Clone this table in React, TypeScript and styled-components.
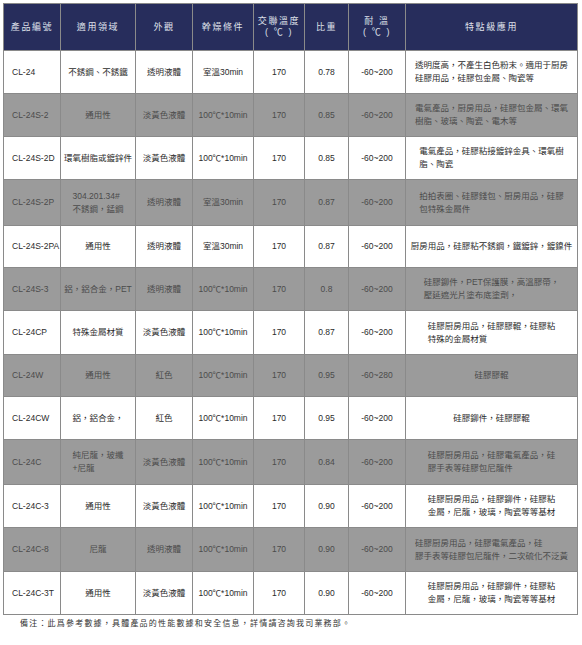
import React from "react";
import styled, { createGlobalStyle } from "styled-components";

const Global = createGlobalStyle`
  html, body { margin: 0; padding: 0; background: #ffffff; }
  body { font-family: "Liberation Sans", "Noto Sans CJK TC", sans-serif; }
`;

const Page = styled.div`
  padding: 3px 5px 0 3px;
  width: 574px;
`;

const Table = styled.table`
  width: 574px;
  border-collapse: collapse;
  table-layout: fixed;
  font-family: "Liberation Sans", "Noto Sans CJK TC", sans-serif;
  font-size: 8.5px;
  border: 1px solid #8a8a8a;
`;

const HeadRow = styled.tr`
  height: 47px;
  background: #272d5c;
`;

const Th = styled.th`
  border: 1px solid #8a8a8a;
  color: #dfe0ea;
  font-weight: normal;
  font-size: 9px;
  letter-spacing: 1.6px;
  line-height: 11px;
  text-align: center;
  vertical-align: middle;
  padding: 0 2px;
`;

const Row = styled.tr<{ $grey: boolean; $h: number }>`
  height: ${(p) => p.$h}px;
  background: ${(p) => (p.$grey ? "#9b9b9b" : "#ffffff")};
  color: ${(p) => (p.$grey ? "#4b4b4b" : "#2b2b2b")};
`;

const Td = styled.td<{ $left?: boolean }>`
  border: 1px solid #8a8a8a;
  text-align: ${(p) => (p.$left ? "left" : "center")};
  padding: ${(p) => (p.$left ? "0 0 0 8px" : "0 2px")};
  vertical-align: middle;
  line-height: 13px;
  white-space: nowrap;
  overflow: hidden;
`;

const Lines = styled.span`
  display: inline-block;
  text-align: left;
`;

const Note = styled.div`
  margin: 3px 0 0 17px;
  font-family: "Liberation Sans", "Noto Sans CJK TC", sans-serif;
  font-size: 8px;
  letter-spacing: 1.2px;
  color: #333333;
  line-height: 11px;
`;

const widths = [57, 75, 57, 61, 51, 44, 57, 172];

const heads: string[][] = [
  ["產品編號"],
  ["適用領域"],
  ["外觀"],
  ["幹燥條件"],
  ["交聯溫度", "( ℃ )"],
  ["比重"],
  ["耐 溫", "( ℃ )"],
  ["特點級應用"],
];

type R = { c: (string | string[])[] };

const rows: R[] = [
  { c: ["CL-24", "不銹鋼、不銹鐵", "透明液體", "室溫30min", "170", "0.78", "-60~200", ["透明度高，不產生白色粉末。適用于厨房", "硅膠用品，硅膠包金屬、陶瓷等"]] },
  { c: ["CL-24S-2", "通用性", "淡黃色液體", "100℃*10min", "170", "0.85", "-60~200", ["電氣產品，厨房用品，硅膠包金屬、環氧", "樹脂、玻璃、陶瓷、電木等"]] },
  { c: ["CL-24S-2D", "環氧樹脂或鍍鋅件", "淡黃色液體", "100℃*10min", "170", "0.85", "-60~200", ["電氣產品，硅膠粘接鍍鋅金具、環氧樹", "脂、陶瓷"]] },
  { c: ["CL-24S-2P", ["304.201.34#", "不銹鋼，錳鋼"], "透明液體", "室溫30min", "170", "0.87", "-60~200", ["拍拍表圈、硅膠錢包、厨房用品，硅膠", "包特殊金屬件"]] },
  { c: ["CL-24S-2PA", "通用性", "透明液體", "室溫30min", "170", "0.87", "-60~200", ["厨房用品，硅膠粘不銹鋼，鐵鍍鋅，鍍鎳件"]] },
  { c: ["CL-24S-3", "鋁，鋁合金，PET", "透明液體", "100℃*10min", "170", "0.8", "-60~200", ["硅膠鉚件，PET保護膜，高溫膠帶，", "壓延遮光片塗布底塗劑，"]] },
  { c: ["CL-24CP", "特殊金屬材質", "淡黃色液體", "100℃*10min", "170", "0.87", "-60~200", ["硅膠厨房用品，硅膠膠輥，硅膠粘", "特殊的金屬材質"]] },
  { c: ["CL-24W", "通用性", "紅色", "100℃*10min", "170", "0.95", "-60~280", ["硅膠膠輥"]] },
  { c: ["CL-24CW", "鋁，鋁合金，", "紅色", "100℃*10min", "170", "0.95", "-60~200", ["硅膠鉚件，硅膠膠輥"]] },
  { c: ["CL-24C", ["純尼龍，玻纖", "+尼龍"], "淡黃色液體", "100℃*10min", "170", "0.84", "-60~200", ["硅膠厨房用品，硅膠電氣產品，硅", "膠手表等硅膠包尼龍件"]] },
  { c: ["CL-24C-3", "通用性", "淡黃色液體", "100℃*10min", "170", "0.90", "-60~200", ["硅膠厨房用品，硅膠鉚件，硅膠粘", "金屬，尼龍，玻璃，陶瓷等等基材"]] },
  { c: ["CL-24C-8", "尼龍", "透明液體", "100℃*10min", "170", "0.90", "-60~200", ["硅膠厨房用品，硅膠電氣產品，硅", "膠手表等硅膠包尼龍件，二次硫化不泛黃"]] },
  { c: ["CL-24C-3T", "通用性", "淡黃色液體", "100℃*10min", "170", "0.90", "-60~200", ["硅膠厨房用品，硅膠鉚件，硅膠粘", "金屬，尼龍，玻璃，陶瓷等等基材"]] },
];

const heights = [43, 43, 43, 46, 42, 43, 44, 42, 43, 45, 43, 44, 43];

function Content({ v }: { v: string | string[] }) {
  const lines = Array.isArray(v) ? v : [v];
  return (
    <Lines>
      {lines.map((l, i) => (
        <React.Fragment key={i}>
          {i > 0 && <br />}
          {l}
        </React.Fragment>
      ))}
    </Lines>
  );
}

export default function App() {
  return (
    <>
      <Global />
      <Page>
        <Table>
          <colgroup>
            {widths.map((w, i) => (
              <col key={i} style={{ width: w }} />
            ))}
          </colgroup>
          <thead>
            <HeadRow>
              {heads.map((h, i) => (
                <Th key={i}>
                  {h.map((l, j) => (
                    <React.Fragment key={j}>
                      {j > 0 && <br />}
                      {l}
                    </React.Fragment>
                  ))}
                </Th>
              ))}
            </HeadRow>
          </thead>
          <tbody>
            {rows.map((r, i) => (
              <Row key={i} $grey={i % 2 === 1} $h={heights[i]}>
                {r.c.map((v, j) => (
                  <Td key={j} $left={j === 0}>
                    {j === 0 ? v : <Content v={v} />}
                  </Td>
                ))}
              </Row>
            ))}
          </tbody>
        </Table>
        <Note>備注：此爲參考數據，具體產品的性能數據和安全信息，詳情請咨詢我司業務部。</Note>
      </Page>
    </>
  );
}
